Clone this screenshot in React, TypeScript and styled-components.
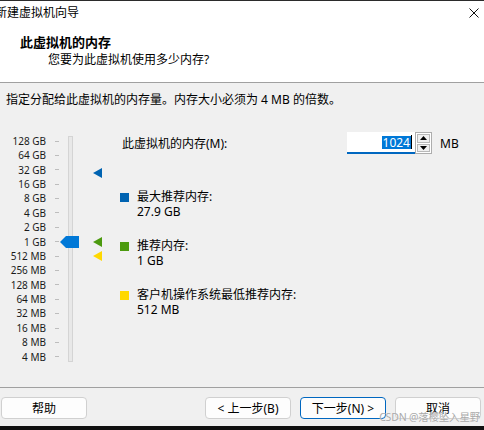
import styled, { createGlobalStyle } from "styled-components";

const GlobalStyle = createGlobalStyle`
  html, body {
    margin: 0;
    padding: 0;
  }
  body {
    font-family: "Noto Sans", "Noto Sans CJK SC", sans-serif;
    font-size: 12px;
    color: #000;
    background: #f0f0f0;
  }
`;

const ROW_H = 14.4;
const TOP_MB = 131072;
const SCALE = [
  "128 GB", "64 GB", "32 GB", "16 GB", "8 GB", "4 GB", "2 GB", "1 GB",
  "512 MB", "256 MB", "128 MB", "64 MB", "32 MB", "16 MB", "8 MB", "4 MB",
];
const centerOf = (mb: number) => (Math.log2(TOP_MB / mb) + 0.5) * ROW_H;

const MEMORY_MB = 1024;
const LEGEND = [
  { mb: 28570, color: "#0063b1", label: "最大推荐内存:", value: "27.9 GB" },
  { mb: 1024, color: "#4c9a0f", label: "推荐内存:", value: "1 GB" },
  { mb: 512, color: "#ffd800", label: "客户机操作系统最低推荐内存:", value: "512 MB" },
];

const Window = styled.div`
  position: relative;
  width: 484px;
  height: 430px;
  display: flex;
  flex-direction: column;
  overflow: hidden;
  background: #f0f0f0;
`;

const Top = styled.div`
  box-sizing: border-box;
  height: 83px;
  background: #fff;
  border-top: 1px solid #2b2b2b;
  border-bottom: 1px solid #a0a0a0;
`;

const TitleBar = styled.div`
  height: 24px;
  display: flex;
  align-items: center;
  justify-content: space-between;
  padding-right: 5px;
`;

const TitleText = styled.span`
  margin-left: -5px;
  line-height: 16px;
`;

const Header = styled.div`
  padding-top: 9px;
  display: flex;
  flex-direction: column;
  gap: 2px;
`;

const Heading = styled.div`
  margin-left: 20px;
  font-size: 13px;
  font-weight: bold;
  line-height: 16px;
`;

const SubHeading = styled.div`
  margin-left: 48px;
  line-height: 16px;
`;

const Body = styled.div`
  flex: 1;
  display: flex;
  flex-direction: column;
`;

const Instruction = styled.div`
  padding: 9px 0 0 6px;
  line-height: 16px;
`;

const Main = styled.div`
  margin-top: 18px;
  display: flex;
  align-items: flex-start;
`;

const SliderPanel = styled.div`
  margin-top: 7.8px;
  height: ${SCALE.length * ROW_H}px;
  display: flex;
`;

const Scale = styled.div`
  display: flex;
  flex-direction: column;
`;

const ScaleRow = styled.div`
  height: ${ROW_H}px;
  display: grid;
  grid-template-columns: 46px 4px;
  column-gap: 9px;
  align-items: center;
  font-size: 10px;
  line-height: ${ROW_H}px;
  color: #1a1a1a;
`;

const ScaleLabel = styled.span`
  text-align: right;
  white-space: nowrap;
`;

const Tick = styled.span`
  height: 1px;
  background: #bdbdbd;
`;

const TrackColumn = styled.div`
  position: relative;
  width: 5px;
  margin-left: 9px;
  padding: 2px 0;
  display: flex;
`;

const Track = styled.div`
  flex: 1;
  box-sizing: border-box;
  border: 1px solid #d4d4d4;
  background: #e8e8e8;
`;

const Thumb = styled.svg`
  position: absolute;
  left: -8px;
  width: 19px;
  height: 12px;
`;

const MarkerColumn = styled.div`
  position: relative;
  width: 9px;
  margin-left: 20px;
`;

const Marker = styled.svg`
  position: absolute;
  left: 0;
  width: 9px;
  height: 10px;
`;

const RightPanel = styled.div`
  margin-left: 18px;
  display: flex;
  flex-direction: column;
`;

const MemoryRow = styled.div`
  margin-top: 6px;
  height: 22px;
  display: grid;
  grid-template-columns: 227px 68px 17px auto;
  align-items: center;
`;

const MemoryLabel = styled.span`
  padding-left: 2px;
`;

const Input = styled.div`
  box-sizing: border-box;
  height: 22px;
  background: #fff;
  border-bottom: 2px solid #0067c0;
  display: flex;
  align-items: center;
  justify-content: flex-end;
  padding-right: 3px;
`;

const Selected = styled.span`
  background: #0078d7;
  color: #fff;
  line-height: 13px;
  padding: 0 1px;
`;

const Caret = styled.span`
  width: 1px;
  height: 14px;
  background: #000;
`;

const Spinner = styled.div`
  box-sizing: border-box;
  height: 22px;
  border: 1px solid #adadad;
  display: flex;
  flex-direction: column;
  gap: 1px;
  padding: 1px;
  background: #fff;
`;

const SpinButton = styled.div`
  flex: 1;
  box-sizing: border-box;
  border: 1px solid #b9b9b9;
  background: #f0f0f0;
  display: flex;
  align-items: center;
  justify-content: center;
`;

const Unit = styled.span`
  margin-left: 8px;
`;

const Legend = styled.div`
  margin-top: 36px;
  display: flex;
  flex-direction: column;
  gap: 20px;
`;

const LegendItem = styled.div`
  display: grid;
  grid-template-columns: 17px auto;
  line-height: 14.5px;
`;

const Swatch = styled.span<{ $color: string }>`
  width: 9px;
  height: 9px;
  margin-top: 2.5px;
  background: ${(p) => p.$color};
`;

const LegendText = styled.div`
  display: flex;
  flex-direction: column;
`;

const Footer = styled.div`
  box-sizing: border-box;
  height: 43px;
  border-top: 1px solid #a0a0a0;
  border-bottom: 4px solid #111;
  display: flex;
  align-items: flex-start;
  padding: 9px 3px 0 1px;
  gap: 9px;
`;

const Button = styled.button<{ $primary?: boolean }>`
  box-sizing: border-box;
  width: 86px;
  height: 22px;
  padding: 0;
  border: 1px solid ${(p) => (p.$primary ? "#0067c0" : "#d0d0d0")};
  border-radius: 4px;
  background: #fdfdfd;
  font: inherit;
  color: #000;
`;

const Spacer = styled.div`
  flex: 1;
`;

const Watermark = styled.div`
  position: absolute;
  right: 4px;
  bottom: 6px;
  font-size: 10.5px;
  letter-spacing: -0.2px;
  color: #a9a9a9;
  text-shadow: 0 0 1px #fff;
  white-space: nowrap;
`;

const CloseIcon = () => (
  <svg width="10" height="10" viewBox="0 0 10 10">
    <path d="M0.5 0.5 L9.5 9.5 M9.5 0.5 L0.5 9.5" stroke="#111" strokeWidth="1" />
  </svg>
);

const Arrow = ({ up }: { up?: boolean }) => (
  <svg width="7" height="4" viewBox="0 0 7 4">
    <polygon points={up ? "0,4 7,4 3.5,0" : "0,0 7,0 3.5,4"} fill="#000" />
  </svg>
);

export default function App() {
  const thumbTop = centerOf(MEMORY_MB) - 6;
  return (
    <>
      <GlobalStyle />
      <Window>
        <Top>
          <TitleBar>
            <TitleText>新建虚拟机向导</TitleText>
            <CloseIcon />
          </TitleBar>
          <Header>
            <Heading>此虚拟机的内存</Heading>
            <SubHeading>您要为此虚拟机使用多少内存?</SubHeading>
          </Header>
        </Top>
        <Body>
          <Instruction>指定分配给此虚拟机的内存量。内存大小必须为 4 MB 的倍数。</Instruction>
          <Main>
            <SliderPanel>
              <Scale>
                {SCALE.map((s) => (
                  <ScaleRow key={s}>
                    <ScaleLabel>{s}</ScaleLabel>
                    <Tick />
                  </ScaleRow>
                ))}
              </Scale>
              <TrackColumn>
                <Track />
                <Thumb viewBox="0 0 19 12" style={{ top: thumbTop }}>
                  <polygon points="0,6 6,0 19,0 19,12 6,12" fill="#0078d7" />
                </Thumb>
              </TrackColumn>
              <MarkerColumn>
                {LEGEND.map((m) => (
                  <Marker key={m.label} viewBox="0 0 9 10" style={{ top: centerOf(m.mb) - 5 }}>
                    <polygon points="0,5 9,0 9,10" fill={m.color} />
                  </Marker>
                ))}
              </MarkerColumn>
            </SliderPanel>
            <RightPanel>
              <MemoryRow>
                <MemoryLabel>此虚拟机的内存(M):</MemoryLabel>
                <Input>
                  <Selected>{MEMORY_MB}</Selected>
                  <Caret />
                </Input>
                <Spinner>
                  <SpinButton>
                    <Arrow up />
                  </SpinButton>
                  <SpinButton>
                    <Arrow />
                  </SpinButton>
                </Spinner>
                <Unit>MB</Unit>
              </MemoryRow>
              <Legend>
                {LEGEND.map((l) => (
                  <LegendItem key={l.label}>
                    <Swatch $color={l.color} />
                    <LegendText>
                      <span>{l.label}</span>
                      <span>{l.value}</span>
                    </LegendText>
                  </LegendItem>
                ))}
              </Legend>
            </RightPanel>
          </Main>
        </Body>
        <Footer>
          <Button>帮助</Button>
          <Spacer />
          <Button>&lt; 上一步(B)</Button>
          <Button $primary>下一步(N) &gt;</Button>
          <Button>取消</Button>
        </Footer>
        <Watermark>CSDN @落樱坠入星野</Watermark>
      </Window>
    </>
  );
}
